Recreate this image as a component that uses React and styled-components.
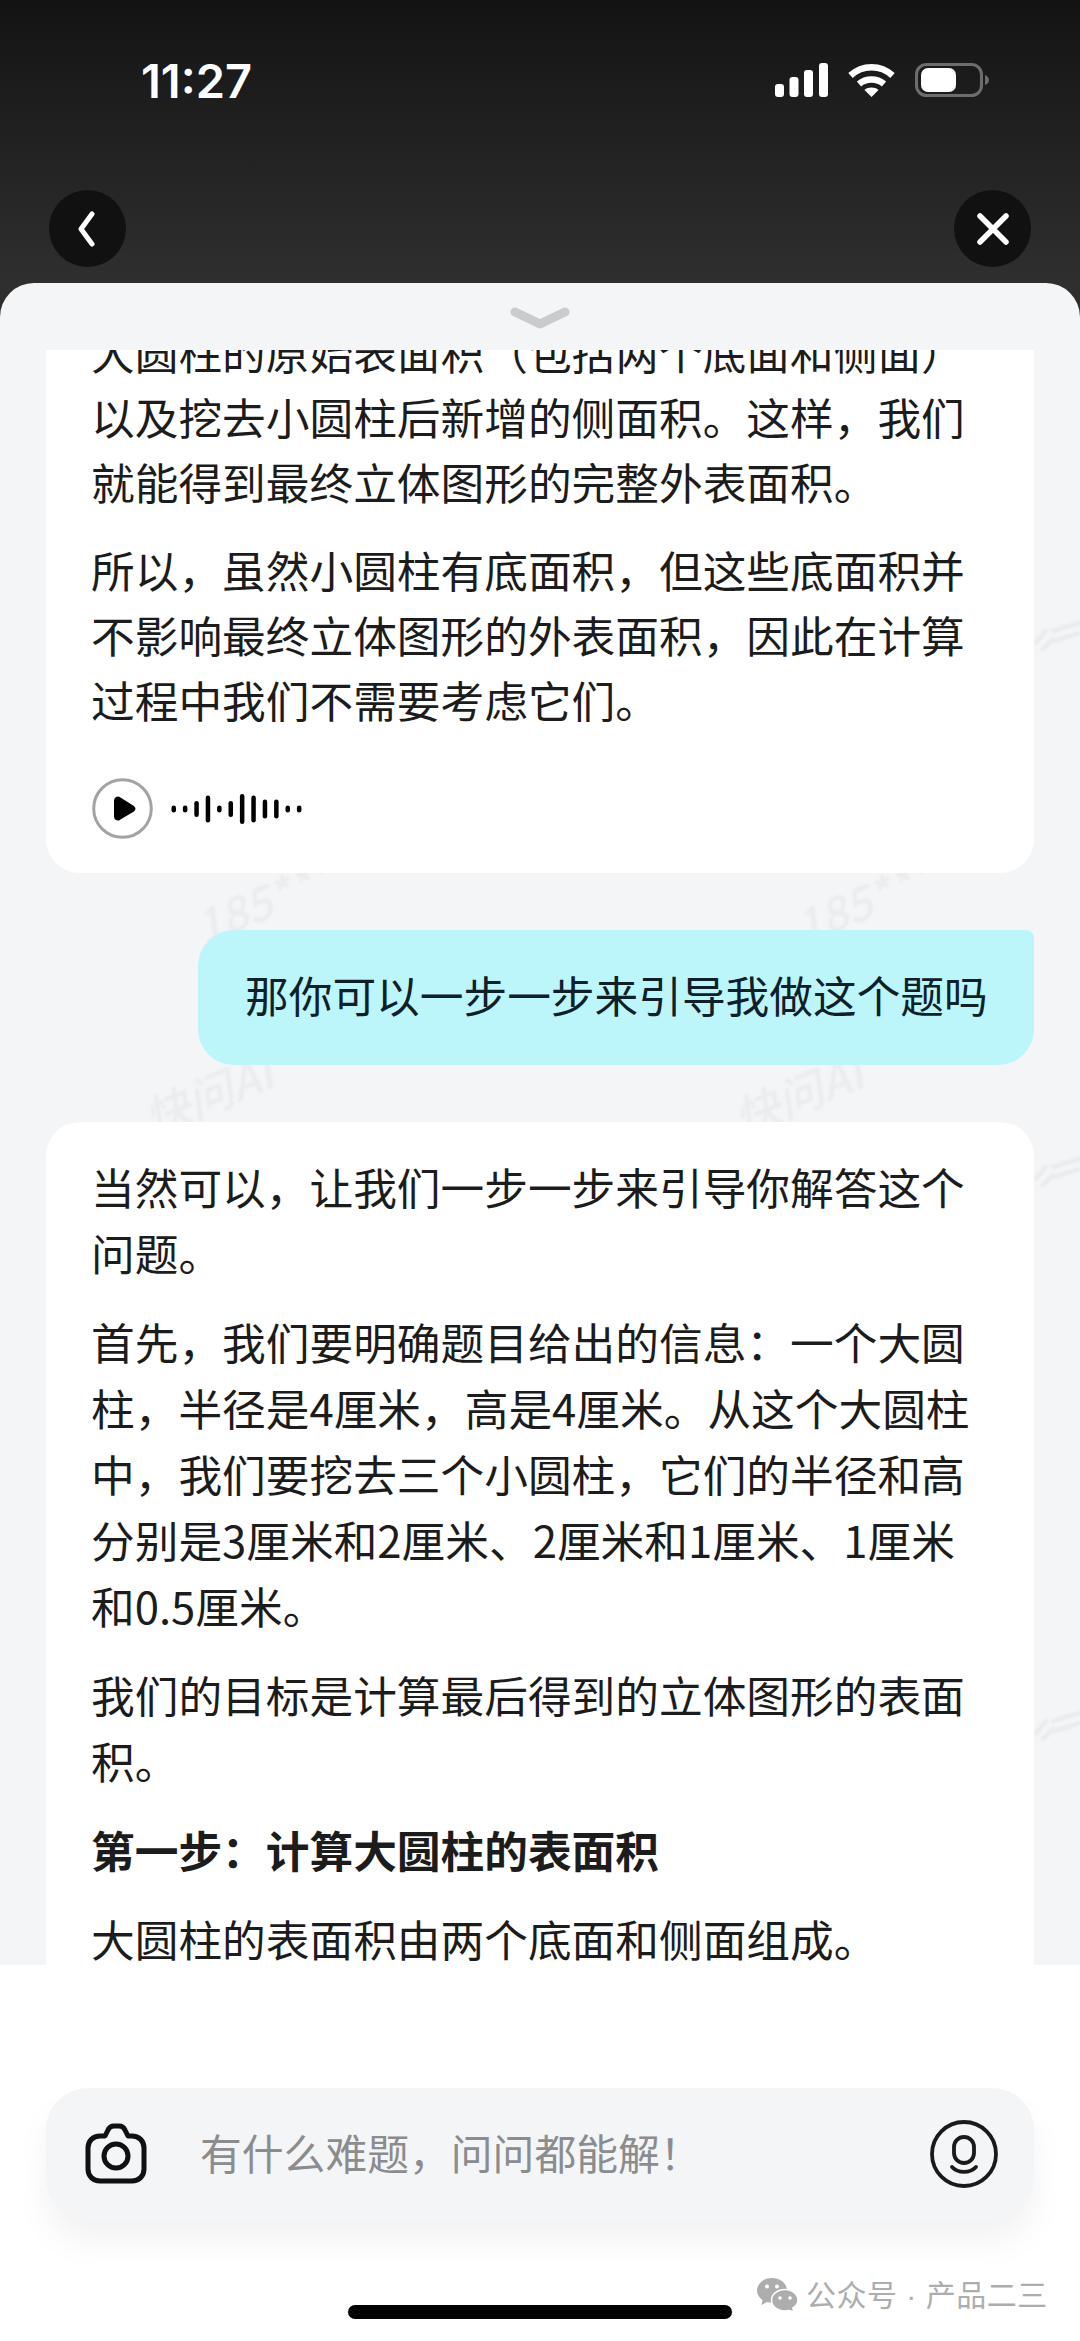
import React from 'react'
import styled, { createGlobalStyle } from 'styled-components'

const Global = createGlobalStyle`
  html, body { margin: 0; padding: 0; background: #fff; }
  body { width: 1080px; height: 2341px; overflow: hidden; font-family: "Noto Sans CJK SC", "Liberation Sans", sans-serif; }
`

const Screen = styled.div`
  position: relative;
  width: 1080px;
  height: 2341px;
  display: flex;
  flex-direction: column;
  overflow: hidden;
  background: #2f2f2f;
`

const TopArea = styled.div`
  height: 284px;
  flex: none;
  box-sizing: border-box;
  background: linear-gradient(180deg, #131313 0%, #1c1c1c 30%, #2f2f2f 100%);
  padding-top: 54px;
`

const StatusBar = styled.div`
  display: flex;
  align-items: center;
  justify-content: space-between;
  height: 52px;
  padding: 0 90px 0 141px;
`

const Time = styled.div`
  font-family: Inter, "Liberation Sans", sans-serif;
  font-size: 47px;
  font-weight: 600;
  color: #fff;
`

const StatusIcons = styled.div`
  display: flex;
  align-items: center;
  gap: 20px;
`

const NavBar = styled.div`
  display: flex;
  justify-content: space-between;
  padding: 0 49px;
  margin-top: 84px;
`

const RoundButton = styled.div`
  width: 77px;
  height: 77px;
  border-radius: 50%;
  background: #111;
  display: flex;
  align-items: center;
  justify-content: center;
`

const Sheet = styled.div`
  flex: none;
  height: 1682px;
  background: #f4f5f7;
  border-radius: 34px 34px 0 0;
  margin-top: -1px;
  display: flex;
  flex-direction: column;
`

const Handle = styled.div`
  height: 67px;
  flex: none;
  display: flex;
  justify-content: center;
  padding-top: 23px;
  box-sizing: border-box;
`

const ScrollClip = styled.div`
  position: relative;
  height: 1615px;
  overflow: hidden;
`

const Feed = styled.div`
  position: relative;
  margin-top: -62px;
  padding: 0 46px;
  display: flex;
  flex-direction: column;
`

const Mark = styled.span`
  position: absolute;
  left: ${p => p.$x}px;
  top: ${p => p.$y}px;
  font-size: 46px;
  line-height: 60px;
  font-style: italic;
  font-weight: 500;
  white-space: nowrap;
  color: #ebecee;
  transform: rotate(-22deg);
  filter: blur(1px);
`

const Smudge = styled.svg`
  position: absolute;
  left: 1035px;
  top: ${p => p.$y}px;
  filter: blur(1px);
`

const Card = styled.div`
  position: relative;
  background: #fff;
  border-radius: 34px;
  padding: 31px 46px ${p => p.$bottom || 34}px 45px;
  margin-top: ${p => p.$top || 0}px;
  p { line-height: ${p => p.$lh}px; }
`

const Para = styled.p`
  margin: 0 0 23px;
  font-size: 43.7px;
  color: #1c1c1c;
  font-weight: ${p => (p.$bold ? 700 : 400)};
  white-space: nowrap;
  &:last-child { margin-bottom: 0; }
`

const Voice = styled.div`
  display: flex;
  align-items: center;
  gap: 18px;
  margin-top: 46px;
  margin-left: 1px;
  height: 61px;
`

const Bubble = styled.div`
  position: relative;
  align-self: flex-end;
  box-sizing: border-box;
  width: 836px;
  height: 135px;
  margin-top: 57px;
  padding: 32px 0 0 47px;
  background: #bcf6fb;
  border-radius: 36px 8px 36px 36px;
  font-size: 43.7px;
  line-height: 65px;
  color: #102029;
  white-space: nowrap;
`

const Bottom = styled.div`
  position: relative;
  flex: 1;
  background: #fff;
  display: flex;
  flex-direction: column;
  padding: 123px 46px 0;
`

const InputBar = styled.div`
  height: 132px;
  border-radius: 42px;
  background: #f4f5f7;
  box-shadow: 0 22px 34px rgba(0, 0, 0, 0.05);
  display: flex;
  align-items: center;
  padding: 0 36px 0 39px;
`

const Placeholder = styled.div`
  flex: 1;
  margin-left: 53px;
  padding-bottom: 4px;
  font-size: 41.8px;
  color: #8b8c8e;
  white-space: nowrap;
`

const HomeBar = styled.div`
  width: 384px;
  height: 14px;
  border-radius: 7px;
  background: #000;
  align-self: center;
  margin-top: 85px;
`

const Credit = styled.div`
  position: absolute;
  left: 757px;
  bottom: 25px;
  display: flex;
  align-items: center;
  gap: 8px;
  font-size: 30px;
  line-height: 40px;
  letter-spacing: 0.5px;
  color: #adadad;
  white-space: nowrap;
`

const CreditDot = styled.span`
  font-family: "Liberation Sans", sans-serif;
  white-space: pre;
`

const waveBars = [7, 7, 16, 27, 7, 16, 30, 27, 19, 19, 7, 7]

const Signal = () => (
  <svg width="53" height="34" viewBox="0 0 53 34" fill="#fff">
    <rect x="0" y="21" width="9" height="13" rx="3" />
    <rect x="14.5" y="14" width="9" height="20" rx="3" />
    <rect x="29" y="7" width="9" height="27" rx="3" />
    <rect x="44" y="0" width="9" height="34" rx="3" />
  </svg>
)

const Wifi = () => (
  <svg width="47" height="34" viewBox="0 0 47 34" fill="none" stroke="#fff" strokeWidth="6.5">
    <path d="M2.5 12.5C14.5 1.5 32.500 1.500 44.500 12.500" />
    <path d="M11 21C18 15 29 15 36 21" />
    <path d="M16.500 27L23.500 34L30.500 27C26.500 23.800 20.500 23.800 16.500 27Z" fill="#fff" stroke="none" />
  </svg>
)

const Battery = () => (
  <svg width="75" height="34" viewBox="0 0 75 34" fill="none">
    <rect x="1.500" y="1.500" width="65" height="31" rx="10" stroke="#6d6d6d" strokeWidth="3" />
    <rect x="6" y="5" width="35" height="24" rx="7" fill="#fff" />
    <path d="M70 12C73 13 74 15 74 17C74 19 73 21 70 22Z" fill="#6d6d6d" />
  </svg>
)

const BackIcon = () => (
  <svg width="24" height="36" viewBox="0 0 24 36" fill="none" stroke="#fff" strokeWidth="5" strokeLinecap="round" strokeLinejoin="round">
    <path d="M16 3L5 18L16 33" />
  </svg>
)

const CloseIcon = () => (
  <svg width="34" height="34" viewBox="0 0 34 34" fill="none" stroke="#fff" strokeWidth="5.500" strokeLinecap="round">
    <path d="M4 4L30 30M30 4L4 30" />
  </svg>
)

const HandleIcon = () => (
  <svg width="62" height="24" viewBox="0 0 62 24" fill="none" stroke="#c9cbcd" strokeWidth="9" strokeLinecap="round" strokeLinejoin="round">
    <path d="M6 6L31 18L56 6" />
  </svg>
)

const PlayIcon = () => (
  <svg width="61" height="61" viewBox="0 0 61 61">
    <circle cx="30.500" cy="30.500" r="28.800" fill="#fff" stroke="#a3a3a3" strokeWidth="3" />
    <path d="M23 22.500C23 20 25.500 19 27.500 20L41 28.500C43 30 43 31.500 41 33L27.500 41C25.500 42 23 41 23 38.500Z" fill="#000" stroke="#000" strokeWidth="2" strokeLinejoin="round" />
  </svg>
)

const Wave = () => (
  <svg width="134" height="32" viewBox="0 0 134 32" fill="#000">
    {waveBars.map((h, i) => (
      <rect key={i} x={i * 11.400 + 0.500} y={16 - h / 2} width="4.500" height={h} rx="2.250" />
    ))}
  </svg>
)

const CameraIcon = () => (
  <svg width="62" height="62" viewBox="0 0 62 62" fill="none" stroke="#111" strokeWidth="5" strokeLinejoin="round">
    <path d="M20 13L23 7C24 4.500 26 3 29 3H34C37 3 39 4.500 40 7L43 13H47C54 13 59 18 59 25V46C59 53 54 58 47 58H15C8 58 3 53 3 46V25C3 18 8 13 15 13Z" />
    <circle cx="31" cy="33" r="12" />
  </svg>
)

const MicIcon = () => (
  <svg width="68" height="68" viewBox="0 0 68 68" fill="none" stroke="#1a1a1a" strokeWidth="3.800" strokeLinecap="round">
    <circle cx="34" cy="34" r="32" />
    <rect x="24" y="17" width="20" height="26" rx="10" />
    <path d="M22 47C28 53.500 40 53.500 46 47" />
  </svg>
)

const WechatIcon = () => (
  <svg width="41" height="34" viewBox="0 0 41 34" fill="#adadad">
    <path d="M15 0C6.700 0 0 5.500 0 12.500C0 16.500 2 19.500 5.500 22L4.500 27L10 24C11.500 24.500 13 24.700 15 24.700C23 24.700 30 19 30 12.500C30 5.500 23.300 0 15 0Z" />
    <path d="M28 11.500C20.500 11.500 14.500 16.300 14.500 22.300C14.500 28.300 20.500 33 28 33C29.500 33 30.800 32.800 32 32.500L37 34L35.800 30C38.800 28 41 25.300 41 22.300C41 16.300 35.300 11.500 28 11.500Z" stroke="#fff" strokeWidth="1.500" />
    <circle cx="10" cy="8.500" r="2" fill="#fff" />
    <circle cx="20" cy="8.500" r="2" fill="#fff" />
    <circle cx="23" cy="20" r="1.800" fill="#fff" />
    <circle cx="33" cy="20" r="1.800" fill="#fff" />
  </svg>
)

const marks = [
  { x: 190, y: 577, t: '185****' },
  { x: 790, y: 577, t: '185****' },
  { x: 140, y: 775, t: '快问AI' },
  { x: 730, y: 775, t: '快问AI' },
]

// logo of the watermark, only its left end shows in the right gutter
const smudges = [325, 861, 1415]

const App = () => (
  <Screen>
    <Global />
    <TopArea>
      <StatusBar>
        <Time>11:27</Time>
        <StatusIcons>
          <Signal />
          <Wifi />
          <Battery />
        </StatusIcons>
      </StatusBar>
      <NavBar>
        <RoundButton><BackIcon /></RoundButton>
        <RoundButton><CloseIcon /></RoundButton>
      </NavBar>
    </TopArea>
    <Sheet>
      <Handle><HandleIcon /></Handle>
      <ScrollClip>
        <Feed>
          {marks.map((m, i) => <Mark key={i} $x={m.x} $y={m.y}>{m.t}</Mark>)}
          {smudges.map(y => (
            <Smudge key={y} $y={y} width="45" height="45" viewBox="0 0 45 45" fill="none" stroke="#e9eaec" strokeWidth="4" strokeLinecap="round">
              <path d="M1 30L11 18M8 36L18 26M18 18L45 10M20 28L45 20" />
            </Smudge>
          ))}
          <Card $lh={65} $bottom={34}>
            <Para>
              大圆柱的原始表面积（包括两个底面和侧面）<br />
              以及挖去小圆柱后新增的侧面积。这样，我们<br />
              就能得到最终立体图形的完整外表面积。
            </Para>
            <Para>
              所以，虽然小圆柱有底面积，但这些底面积并<br />
              不影响最终立体图形的外表面积，因此在计算<br />
              过程中我们不需要考虑它们。
            </Para>
            <Voice>
              <PlayIcon />
              <Wave />
            </Voice>
          </Card>
          <Bubble>那你可以一步一步来引导我做这个题吗</Bubble>
          <Card $lh={66} $top={57}>
            <Para>
              当然可以，让我们一步一步来引导你解答这个<br />
              问题。
            </Para>
            <Para>
              首先，我们要明确题目给出的信息：一个大圆<br />
              柱，半径是4厘米，高是4厘米。从这个大圆柱<br />
              中，我们要挖去三个小圆柱，它们的半径和高<br />
              分别是3厘米和2厘米、2厘米和1厘米、1厘米<br />
              和0.5厘米。
            </Para>
            <Para>
              我们的目标是计算最后得到的立体图形的表面<br />
              积。
            </Para>
            <Para $bold>第一步：计算大圆柱的表面积</Para>
            <Para>大圆柱的表面积由两个底面和侧面组成。</Para>
          </Card>
        </Feed>
      </ScrollClip>
    </Sheet>
    <Bottom>
      <InputBar>
        <CameraIcon />
        <Placeholder>有什么难题，问问都能解！</Placeholder>
        <MicIcon />
      </InputBar>
      <HomeBar />
      <Credit>
        <WechatIcon />
        <span>公众号<CreditDot> · </CreditDot>产品二三</span>
      </Credit>
    </Bottom>
  </Screen>
)

export default App
